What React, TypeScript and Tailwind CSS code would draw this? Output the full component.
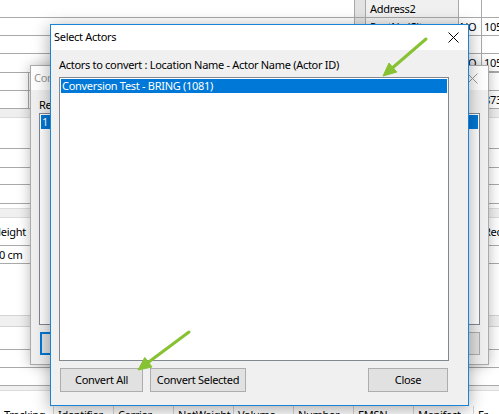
import React from "react";

// rows of the application window behind the dialogs
const bgRows: { h: number; cls: string; left?: string; right?: string; grid?: boolean }[] = [
  { h: 18, cls: "border-b border-[#a9a9a9]" },
  { h: 18, cls: "border-b border-[#a9a9a9]" },
  { h: 18, cls: "border-b border-[#a9a9a9]" },
  { h: 19, cls: "border-b border-[#a9a9a9]" },
  { h: 18, cls: "border-b border-[#a9a9a9]", grid: true },
  { h: 18, cls: "border-b border-[#a9a9a9]", grid: true, right: "873" },
  { h: 9, cls: "bg-[#efefef] border-b border-[#dcdcdc]" },
  { h: 31, cls: "border-b border-[#a9a9a9]" },
  { h: 19, cls: "border-b border-[#a9a9a9]" },
  { h: 17, cls: "border-b border-[#a9a9a9]" },
  { h: 19, cls: "border-b border-[#a9a9a9]" },
  { h: 5, cls: "border-b border-[#dcdcdc]" },
  { h: 9, cls: "bg-[#f0f0f0] border-b border-[#dcdcdc]" },
  { h: 28, cls: "border-b border-[#a9a9a9]", left: "Height", right: "Rec" },
  { h: 18, cls: "border-b border-[#a9a9a9]", left: "10 cm" },
  { h: 51, cls: "" },
  { h: 12, cls: "bg-[#f0f0f0] border-t border-b border-[#d4d4d4]" },
  { h: 23, cls: "border-b border-[#a9a9a9]" },
  { h: 18, cls: "border-b border-[#a9a9a9]" },
  { h: 18, cls: "border-b border-[#a9a9a9]" },
  { h: 5, cls: "bg-[#f0f0f0] border-b border-[#dcdcdc]" },
  { h: 15, cls: "" },
];

const footerCols = ["Tracking", "Identifier", "Carrier", "NetWeight", "Volume", "Number", "EMSN", "Manifest", "Fr"];

const BackgroundApp: React.FC = () => (
  <div className="absolute inset-0 flex flex-col">
    {bgRows.map((r, i) => (
      <div key={i} className={`relative shrink-0 ${r.cls}`} style={{ height: r.h }}>
        {r.grid && <div className="absolute left-[28px] top-0 bottom-0 border-l border-[#a9a9a9]" />}
        {r.left && (
          <span className="absolute left-[-7px] top-1/2 -translate-y-1/2 whitespace-nowrap leading-4">{r.left}</span>
        )}
        {r.right && (
          <span className="absolute left-[484px] top-1/2 -translate-y-1/2 whitespace-nowrap leading-4">{r.right}</span>
        )}
      </div>
    ))}
    <div className="flex h-[10px] shrink-0 overflow-hidden">
      {footerCols.map((c) => (
        <div
          key={c}
          className="w-[60px] shrink-0 overflow-hidden whitespace-nowrap border-r border-[#d4d4d4] pl-[4px] pt-[2px] leading-[14px] first:w-[54px]"
        >
          {c}
        </div>
      ))}
    </div>

    {/* detail panel top right */}
    <div className="absolute left-[354px] top-0 flex flex-col">
      {[
        ["Address2", "", ""],
        ["PostNo/City", "NO", "105"],
        ["Country", "", ""],
        ["PostNo/City", "NO", "105"],
      ].map(([label, a, b], i) => (
        <div key={i} className="flex h-[18px] border-b border-[#a9a9a9]">
          <div className="w-[12px] border-l border-r border-[#a9a9a9] bg-[#e3e3e3]" />
          <div className="w-[92px] whitespace-nowrap bg-[#f0f0f0] pl-[4px] leading-[17px]">{label}</div>
          <div className="w-[23px] border-l border-[#a9a9a9] bg-white pl-[1px] leading-[17px]">{a}</div>
          <div className="w-[30px] border-l border-[#a9a9a9] bg-white pl-[2px] leading-[17px]">{b}</div>
        </div>
      ))}
    </div>
  </div>
);

const CloseGlyph: React.FC<{ color: string }> = ({ color }) => (
  <svg width="11" height="11" viewBox="0 0 11 11">
    <path d="M0.5 0.5 L10.5 10.5 M10.5 0.5 L0.5 10.5" stroke={color} strokeWidth="1" fill="none" />
  </svg>
);

const WinButton: React.FC<{ w: number; focused?: boolean; children: React.ReactNode }> = ({ w, focused, children }) => (
  <div
    className={`flex h-full shrink-0 items-center justify-center whitespace-nowrap bg-[#e1e1e1] ${
      focused ? "border-2 border-[#0078d7]" : "border border-[#adadad]"
    }`}
    style={{ width: w }}
  >
    {children}
  </div>
);

const BackDialog: React.FC = () => (
  <div className="absolute left-[30px] top-[65px] flex h-[300px] w-[459px] flex-col border border-[#aaaaaa] bg-[#f0f0f0] shadow-[0_0_12px_rgba(0,0,0,0.28)]">
    <div className="flex h-[24px] shrink-0 items-center justify-between bg-white pl-[3px] pr-[10px] text-[#999999]">
      <span>Conversion</span>
      <CloseGlyph color="#999999" />
    </div>
    <div className="flex flex-1 flex-col pl-[8px] pt-[7px]">
      <div className="h-[16px] leading-4">Result</div>
      <div className="h-[212px] w-[441px] border border-[#828790] bg-white p-[1px]">
        <div className="h-[14px] bg-[#0078d7] pl-[1px] leading-[14px] text-white">1</div>
      </div>
      <div className="mt-[7px] flex h-[23px] w-[441px] justify-between pl-[1px]">
        <WinButton w={83} focused>
          Convert
        </WinButton>
        <WinButton w={80}>Close</WinButton>
      </div>
    </div>
  </div>
);

const MainDialog: React.FC = () => (
  <div className="absolute left-[50px] top-[24px] flex h-[382px] w-[419px] flex-col border border-[#1883d7] bg-[#f0f0f0] shadow-[0_3px_16px_rgba(0,0,0,0.35)]">
    <div className="flex h-[25px] shrink-0 items-center justify-between bg-white pl-[3px] pr-[9px]">
      <span>Select Actors</span>
      <CloseGlyph color="#000000" />
    </div>
    <div className="flex flex-1 flex-col pl-[8px] pt-[7px]">
      <div className="h-[16px] whitespace-nowrap leading-4">Actors to convert : Location Name - Actor Name (Actor ID)</div>
      <div className="mt-[4px] h-[284px] w-[390px] border border-[#828790] bg-white p-[1px]">
        <div className="h-[14px] bg-[#0078d7] pl-[1px] leading-[14px] text-white">Conversion Test - BRING (1081)</div>
      </div>
      <div className="mt-[7px] flex h-[24px] w-[389px] gap-[7px] pl-[1px]">
        <WinButton w={83}>Convert All</WinButton>
        <WinButton w={96}>Convert Selected</WinButton>
        <div className="flex-1" />
        <WinButton w={80}>Close</WinButton>
      </div>
    </div>
  </div>
);

const Arrows: React.FC = () => (
  <svg className="pointer-events-none absolute inset-0" width="499" height="414" viewBox="0 0 499 414">
    <g fill="#86c232" stroke="#86c232">
      <line x1="426" y1="39" x2="392.9" y2="67.5" strokeWidth="3" strokeLinecap="round" />
      <polygon points="383,76 396.8,72.1 389,63" strokeWidth="1" strokeLinejoin="round" />
      <line x1="189" y1="332" x2="148.4" y2="362.2" strokeWidth="3" strokeLinecap="round" />
      <polygon points="138,370 152,367 144.8,357.4" strokeWidth="1" strokeLinejoin="round" />
    </g>
  </svg>
);

export default function App() {
  return (
    <div className="relative h-[414px] w-[499px] overflow-hidden bg-white font-['Noto_Sans',sans-serif] text-[11px] tracking-[-0.3px] text-black">
      <BackgroundApp />
      <BackDialog />
      <MainDialog />
      <Arrows />
    </div>
  );
}
